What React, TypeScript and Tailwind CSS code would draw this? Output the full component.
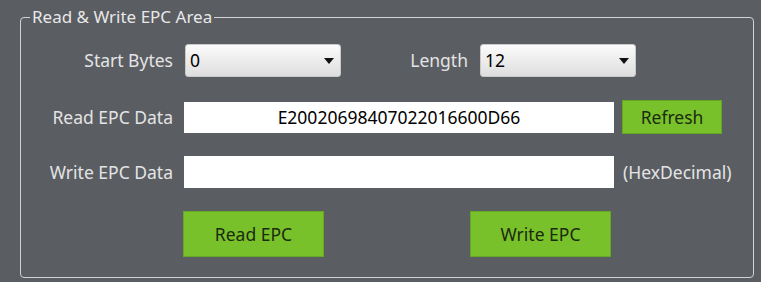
const font = { fontFamily: '"Noto Sans", "Open Sans", sans-serif' };

function Select({ value }: { value: string }) {
  return (
    <div className="flex h-[33px] w-[156px] items-center justify-between rounded-[3px] border border-[#c9c9c9] bg-gradient-to-b from-[#fbfbfb] to-[#dedede] pl-[4px] pr-[6px] text-[17.5px] text-black">
      <span>{value}</span>
      <svg width="10" height="6" viewBox="0 0 10 6">
        <path d="M0 0h10L5 6z" fill="#111" />
      </svg>
    </div>
  );
}

function GreenButton({ label, w, h }: { label: string; w: string; h: string }) {
  return (
    <button className={`flex items-center justify-center border border-[#64a824] bg-[#78c12b] text-[17.5px] text-[#1c2a0e] ${w} ${h}`}>
      {label}
    </button>
  );
}

export default function App() {
  return (
    <div className="h-[282px] w-[761px] bg-[#5a5d62] pl-[20px] pt-[7px]" style={font}>
      <fieldset className="m-0 h-[271px] w-[734px] rounded-[4px] border border-[#d2d2d2] p-0">
        <legend className="ml-[9px] px-[2px] text-[17px] leading-[20px] text-[#e8e8e8]">
          Read &amp; Write EPC Area
        </legend>

        <div className="mt-[17px] flex h-[33px] items-center">
          <div className="w-[152px] text-right text-[17.5px] text-[#e4e4e4]">Start Bytes</div>
          <div className="ml-[12px]">
            <Select value="0" />
          </div>
          <div className="w-[127px] text-right text-[17.5px] text-[#e4e4e4]">Length</div>
          <div className="ml-[12px]">
            <Select value="12" />
          </div>
        </div>

        <div className="mt-[23px] flex h-[34px] items-center">
          <div className="w-[152px] text-right text-[17.5px] text-[#e4e4e4]">Read EPC Data</div>
          <div className="ml-[11px] flex h-[31px] w-[430px] items-center justify-center bg-white text-[17.5px] text-black">
            E20020698407022016600D66
          </div>
          <div className="ml-[8px]">
            <GreenButton label="Refresh" w="w-[100px]" h="h-[34px]" />
          </div>
        </div>

        <div className="mt-[22px] flex h-[32px] items-center">
          <div className="w-[152px] text-right text-[17.5px] text-[#e4e4e4]">Write EPC Data</div>
          <div className="ml-[11px] h-[32px] w-[430px] bg-white" />
          <div className="ml-[9px] text-[17.5px] text-[#e4e4e4]">(HexDecimal)</div>
        </div>

        <div className="mt-[23px] flex h-[46px] items-center pl-[162px]">
          <GreenButton label="Read EPC" w="w-[141px]" h="h-[46px]" />
          <div className="ml-[146px]">
            <GreenButton label="Write EPC" w="w-[141px]" h="h-[46px]" />
          </div>
        </div>
      </fieldset>
    </div>
  );
}
